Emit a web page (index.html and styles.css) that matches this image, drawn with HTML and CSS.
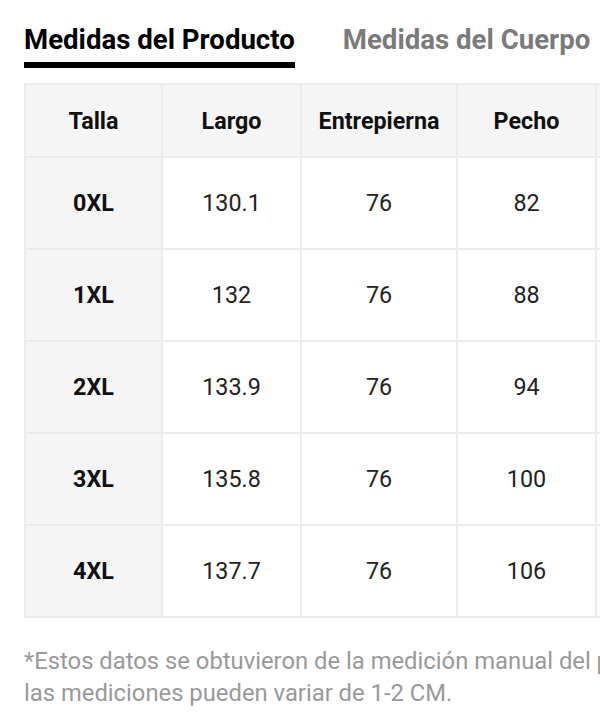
FILE: index.html
```html
<!DOCTYPE html>
<html lang="es">
<head>
<meta charset="utf-8">
<link rel="stylesheet" href="styles.css">
</head>
<body>
<div class="page">
  <div class="tabs">
    <div class="tab active">Medidas del Producto</div>
    <div class="tab">Medidas del Cuerpo</div>
  </div>
  <table class="sizes">
    <colgroup>
      <col class="c1"><col class="c2"><col class="c3"><col class="c4"><col class="c5">
    </colgroup>
    <thead>
      <tr><th>Talla</th><th>Largo</th><th>Entrepierna</th><th>Pecho</th><th></th></tr>
    </thead>
    <tbody>
      <tr><th>0XL</th><td>130.1</td><td>76</td><td>82</td><td></td></tr>
      <tr><th>1XL</th><td>132</td><td>76</td><td>88</td><td></td></tr>
      <tr><th>2XL</th><td>133.9</td><td>76</td><td>94</td><td></td></tr>
      <tr><th>3XL</th><td>135.8</td><td>76</td><td>100</td><td></td></tr>
      <tr><th>4XL</th><td>137.7</td><td>76</td><td>106</td><td></td></tr>
    </tbody>
  </table>
  <p class="note">*Estos datos se obtuvieron de la medición manual del producto,<br>las mediciones pueden variar de 1-2 CM.</p>
</div>
</body>
</html>
```
FILE: styles.css
```css
html, body {
  margin: 0;
  padding: 0;
  background: #fff;
  overflow: hidden;
}
body {
  width: 600px;
  height: 721px;
  font-family: Roboto, "Noto Sans", sans-serif;
  color: #111;
}
.page {
  padding-left: 24px;
  width: 900px;
}
.tabs {
  display: flex;
  gap: 48px;
  padding-top: 24px;
}
.tab {
  font-size: 27.6px;
  font-weight: 700;
  color: #7a7a7a;
  line-height: 32px;
  padding-bottom: 12px;
  box-sizing: border-box;
}
.tab.active {
  color: #000;
  padding-bottom: 6px;
  border-bottom: 6px solid #000;
}
.sizes {
  margin-top: 15px;
  border-collapse: collapse;
  table-layout: fixed;
  width: 709px;
}
.c1 { width: 137px; }
.c2 { width: 139px; }
.c3 { width: 156px; }
.c4 { width: 139px; }
.c5 { width: 138px; }
.sizes th, .sizes td {
  border: 2px solid #ebebeb;
  text-align: center;
  font-size: 23.3px;
  padding: 0;
}
.sizes thead th {
  height: 71px;
  background: #f5f5f5;
  font-weight: 700;
  color: #111;
}
.sizes tbody th {
  background: #f5f5f5;
  font-weight: 700;
  color: #111;
  height: 90px;
}
.sizes tbody td {
  font-weight: 400;
  color: #222;
  height: 90px;
}
.note {
  margin: 27px 0 0;
  font-size: 23.8px;
  line-height: 32px;
  color: #999;
  white-space: nowrap;
}
```
